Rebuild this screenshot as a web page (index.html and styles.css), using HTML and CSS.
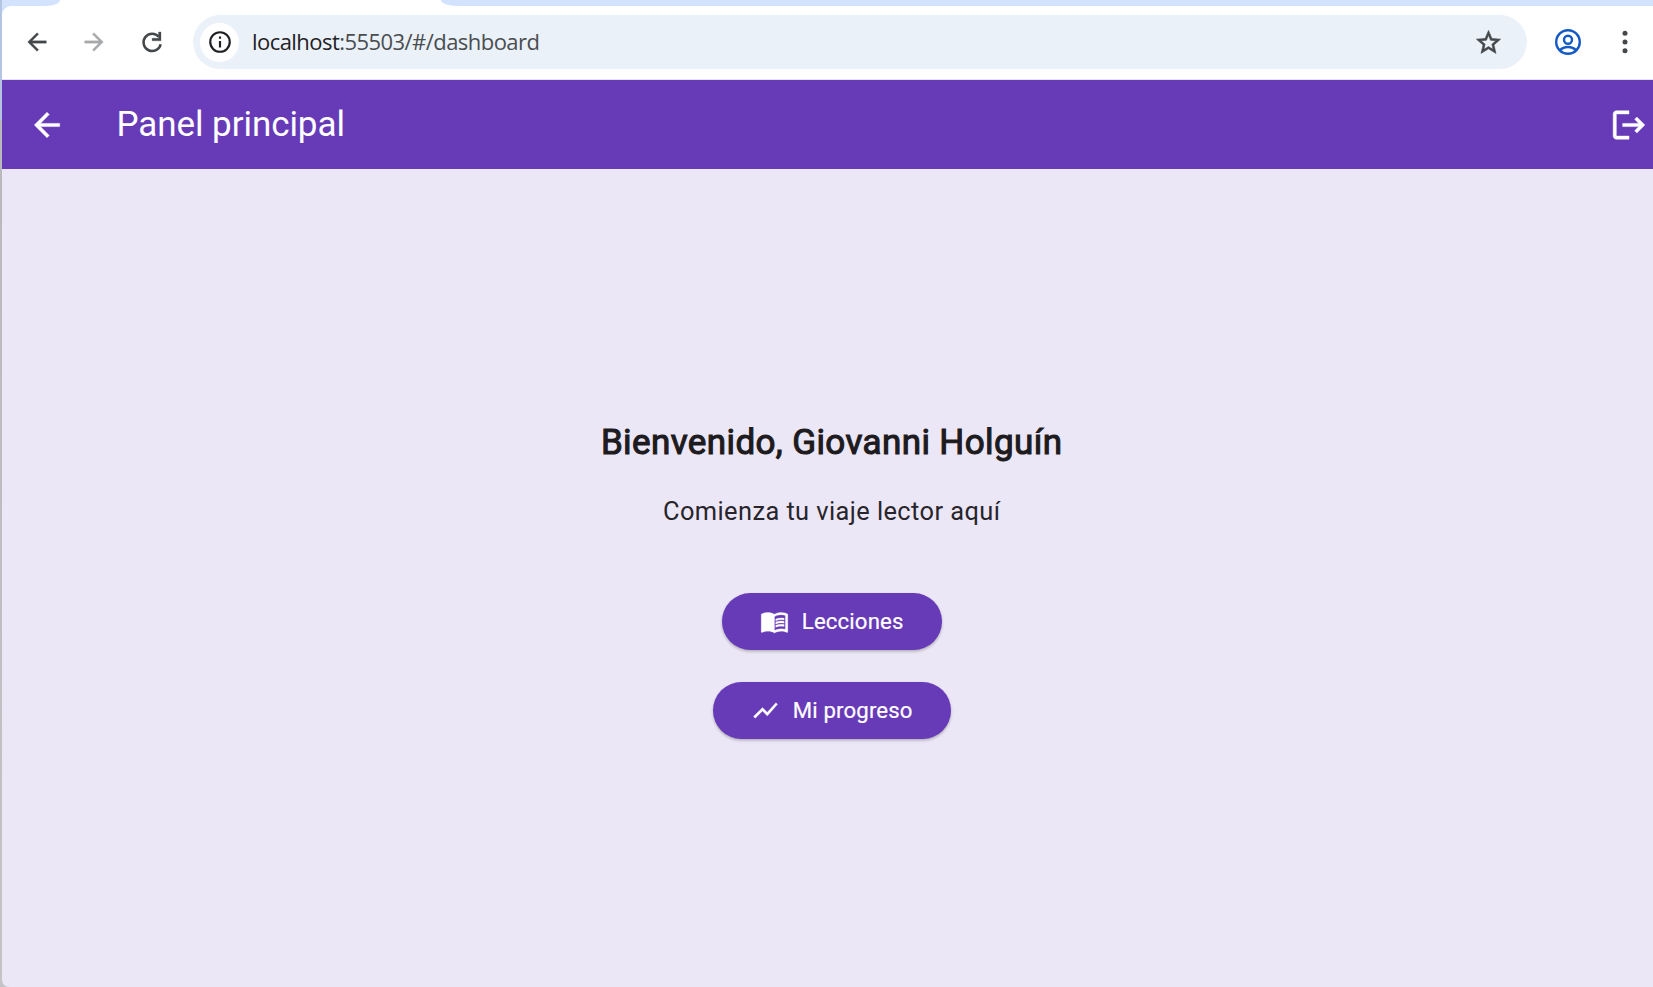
FILE: index.html
```html
<!DOCTYPE html>
<html lang="es">
<head>
<meta charset="utf-8">
<title>Panel principal</title>
<link rel="stylesheet" href="styles.css">
</head>
<body>
<div class="window">
  <div class="tabstrip"><div class="tab-left"></div><div class="tab-active"></div><div class="tab-rest"></div></div>
  <div class="toolbar-wrap">
  <div class="toolbar">
    <svg class="nav back" viewBox="0 0 24 24"><path d="M20 11H7.83l5.59-5.59L12 4l-8 8 8 8 1.41-1.41L7.83 13H20v-2z"/></svg>
    <svg class="nav forward" viewBox="0 0 24 24"><path d="M12 4l-1.41 1.41L16.17 11H4v2h12.17l-5.58 5.59L12 20l8-8z"/></svg>
    <svg class="nav reload" viewBox="0 0 24 24"><path d="M18.3 7.2A8 8 0 1 0 20 14" fill="none" stroke="currentColor" stroke-width="2.3"/><path d="M18 2.7h2.3v8.200h-8.200V8.500H18z"/></svg>
    <div class="omnibox">
      <span class="info"><svg viewBox="0 0 24 24"><circle cx="12" cy="12" r="9" fill="none" stroke="currentColor" stroke-width="2"/><path d="M11 17h2v-6h-2v6zM11 9h2V7h-2v2z"/></svg></span>
      <span class="url"><span class="host">localhost</span>:55503/#/dashboard</span>
      <svg class="star" viewBox="0 0 24 24"><path d="M22 9.240l-7.190-.62L12 2 9.190 8.630 2 9.240l5.460 4.730L5.820 21 12 17.270 18.180 21l-1.630-7.030L22 9.240zM12 15.400l-3.760 2.270 1-4.280-3.320-2.880 4.380-.38L12 6.100l1.710 4.040 4.380.38-3.320 2.880 1 4.280L12 15.400z"/></svg>
    </div>
    <svg class="profile" viewBox="0 0 26 26"><circle cx="13" cy="13" r="11.800"/><circle cx="13" cy="10.700" r="4"/><path d="M4.800 21.300c4.300-4.500 12.100-4.500 16.400 0"/></svg>
    <svg class="menu" viewBox="0 0 6 24"><circle cx="3" cy="3.200" r="2.500"/><circle cx="3" cy="12" r="2.500"/><circle cx="3" cy="20.800" r="2.500"/></svg>
  </div>
  </div>
  <header class="appbar">
    <svg class="appbar-icon" viewBox="0 0 24 24"><path d="M20 11H7.830l5.590-5.590L12 4l-8 8 8 8 1.410-1.410L7.830 13H20v-2z"/></svg>
    <span class="title">Panel principal</span>
    <svg class="appbar-icon logout" viewBox="0 0 24 24"><path d="M17 7l-1.410 1.410L18.170 11H8v2h10.170l-2.580 2.580L17 17l5-5zM4 5h8V3H4c-1.100 0-2 .9-2 2v14c0 1.100.9 2 2 2h8v-2H4V5z"/></svg>
  </header>
  <main class="content">
    <div class="welcome">Bienvenido, Giovanni Holguín</div>
    <div class="subtitle">Comienza tu viaje lector aquí</div>
    <button class="btn lessons"><svg viewBox="0 0 24 24"><path d="M21 5c-1.110-.35-2.330-.5-3.500-.5-1.950 0-4.050.4-5.500 1.500-1.450-1.100-3.550-1.500-5.500-1.500S2.450 4.900 1 6v14.650c0 .25.25.5.5.5.1 0 .15-.05.25-.05C3.100 20.450 5.050 20 6.500 20c1.950 0 4.050.4 5.500 1.500 1.350-.85 3.800-1.500 5.500-1.500 1.650 0 3.350.3 4.750 1.050.1.050.15.050.25.050.25 0 .5-.25.5-.5V6c-.6-.45-1.250-.75-2-1zm0 13.500c-1.100-.35-2.300-.5-3.500-.5-1.700 0-4.150.65-5.500 1.500V8c1.350-.85 3.800-1.500 5.500-1.500 1.200 0 2.400.15 3.500.5v11.500z"/><path d="M17.500 10.500c.88 0 1.730.09 2.500.26V9.240c-.79-.15-1.640-.24-2.500-.24-1.700 0-3.240.29-4.500.83v1.660c1.130-.64 2.700-.99 4.500-.99zM13 12.490v1.660c1.130-.64 2.700-.99 4.500-.99.88 0 1.730.09 2.500.26V11.900c-.79-.15-1.640-.24-2.500-.24-1.700 0-3.240.3-4.500.83zM17.500 14.330c-1.700 0-3.240.29-4.500.83v1.660c1.130-.64 2.700-.99 4.500-.99.88 0 1.730.09 2.500.26v-1.520c-.79-.16-1.640-.24-2.500-.24z"/></svg><span class="label">Lecciones</span></button>
    <button class="btn progress"><svg viewBox="0 0 24 24"><path d="M3.500 18.490l6-6.010 4 4L22 6.920l-1.410-1.410-7.090 7.970-4-4L2 16.990z"/></svg><span class="label">Mi progreso</span></button>
  </main>
</div>
</body>
</html>
```
FILE: styles.css
```css
* { box-sizing: border-box; }
body {
  margin: 0;
  width: 1653px;
  height: 987px;
  overflow: hidden;
  background: linear-gradient(#b4c5e4 0, #b4c5e4 119px, #b9b8bd 120px, #c4c3c6 100%);
  font-family: Roboto, sans-serif;
}
svg { display: block; flex: none; fill: currentColor; }
.window {
  height: 987px;
  margin-left: 2px;
  display: flex;
  flex-direction: column;
  background: #ece7f6;
  border-bottom-left-radius: 7px;
  overflow: hidden;
}
.tabstrip { display: flex; height: 6px; background: #fff; }
.tab-left { width: 58px; background: #d3e3fd; border-bottom-right-radius: 14px 6px; }
.tab-active { width: 381px; }
.tab-rest { flex: 1; background: #d3e3fd; border-bottom-left-radius: 16px 6px; }
.toolbar-wrap { flex: none; background: #d3e3fd; }
.toolbar {
  height: 74px;
  display: flex;
  align-items: center;
  padding-bottom: 2px;
  background: #fff;
  color: #45484b;
  border-top-left-radius: 9px;
  box-shadow: inset 0 -1px #e6e1ee;
}
.nav { width: 28px; height: 28px; stroke: currentColor; stroke-width: 0.250px; }
.back { margin-left: 21px; }
.forward { margin-left: 29px; color: #a8a9aa; }
.reload { width: 26px; height: 26px; margin-left: 31px; }
.omnibox {
  width: 1334px;
  height: 54px;
  margin-left: 28px;
  border-radius: 27px;
  background: #ebf1f8;
  display: flex;
  align-items: center;
}
.info {
  width: 39px;
  height: 39px;
  margin-left: 7px;
  border-radius: 50%;
  background: #fff;
  color: #202124;
  display: grid;
  place-items: center;
}
.info svg { width: 26px; height: 26px; }
.url {
  margin-left: 13px;
  padding-bottom: 2px;
  font: 22px/32px "Open Sans", sans-serif;
  letter-spacing: -0.550px;
  color: #4a4d50;
  white-space: nowrap;
}
.host { color: #1f2124; }
.star { width: 29px; height: 29px; margin-left: auto; margin-right: 24px; stroke: currentColor; stroke-width: 0.500px; }
.profile { width: 26px; height: 26px; margin-left: 28px; color: #1459c5; fill: none; stroke: currentColor; stroke-width: 2.400px; }
.menu { width: 6px; height: 24px; margin-left: 41px; }
.appbar {
  height: 89px;
  flex: none;
  display: flex;
  align-items: center;
  padding: 0 5px 0 25.500px;
  background: #673ab7;
  color: #fff;
}
.appbar-icon { width: 38px; height: 38px; stroke: currentColor; stroke-width: 0.300px; }
.title { margin-left: 51px; font-size: 35px; line-height: 44px; letter-spacing: -0.070px; white-space: nowrap; }
.logout { margin-left: auto; }
.content {
  flex: 1;
  display: flex;
  flex-direction: column;
  align-items: center;
  padding: 249px 0 0 8.400px;
  color: #1d1b20;
}
.welcome { font-size: 35px; line-height: 50px; letter-spacing: 0.390px; -webkit-text-stroke: 1.100px #1d1b20; white-space: nowrap; }
.subtitle { margin-top: 24px; font-size: 25.400px; line-height: 38px; letter-spacing: 0.420px; white-space: nowrap; color: #27252b; }
.btn {
  height: 57px;
  border: 0;
  padding: 0;
  border-radius: 29px;
  display: flex;
  align-items: center;
  justify-content: center;
  gap: 13px;
  background: #673ab7;
  color: #fff;
  font: 400 22.200px/32px Roboto, sans-serif;
  letter-spacing: 0.150px;
  box-shadow: 0 1.500px 3px rgba(0, 0, 0, 0.26);
}
.btn svg { width: 29px; height: 29px; stroke: currentColor; stroke-width: 0.200px; }
.label { padding-bottom: 2px; -webkit-text-stroke: 0.200px #fff; }
.lessons { width: 220px; margin-top: 63px; }
.progress { width: 238px; margin-top: 32px; }
```
